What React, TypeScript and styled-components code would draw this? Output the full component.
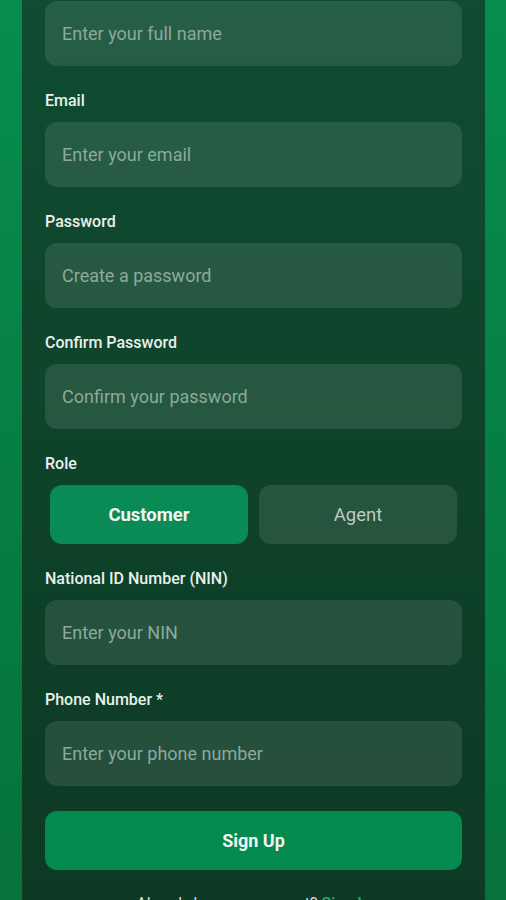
import React, { useState } from 'react'
import styled, { createGlobalStyle } from 'styled-components'

const GlobalStyle = createGlobalStyle`
  html, body {
    margin: 0;
    padding: 0;
    height: 100%;
    overflow: hidden;
  }
  body {
    font-family: Roboto, 'Noto Sans', 'Liberation Sans', sans-serif;
    background: linear-gradient(180deg, #078d4d 0%, #067f43 50%, #06733a 100%);
  }
  * {
    box-sizing: border-box;
  }
`

const Page = styled.div`
  display: flex;
  justify-content: center;
  padding: 0 21px 0 22px;
`

const Card = styled.form`
  width: 100%;
  margin-top: -55px;
  padding: 25px 23px 60px;
  background: linear-gradient(180deg, #0f4d33 0%, #0e4229 55%, #0d3824 100%);
  display: flex;
  flex-direction: column;
  gap: 25px;
`

const Field = styled.div`
  display: flex;
  flex-direction: column;
  gap: 11px;
`

const Label = styled.label`
  font-size: 16px;
  line-height: 20px;
  font-weight: 500;
  color: #e9f1ed;
`

const Input = styled.input`
  height: 65px;
  width: 100%;
  border: none;
  outline: none;
  border-radius: 12px;
  padding: 0 17px;
  background: rgba(255, 255, 255, 0.1);
  font-family: inherit;
  font-size: 18px;
  color: #eef4f1;

  &::placeholder {
    color: #8caa9b;
  }
`

const RoleGroup = styled.div`
  display: grid;
  grid-template-columns: 1fr 1fr;
  gap: 11px;
  padding: 0 5px;
`

const RoleButton = styled.button<{ active?: boolean }>`
  height: 59px;
  border: none;
  border-radius: 12px;
  font-family: inherit;
  font-size: 18.5px;
  font-weight: ${({ active }) => (active ? 700 : 400)};
  color: ${({ active }) => (active ? '#f1f7f4' : '#bccbc4')};
  background: ${({ active }) => (active ? '#0a8a55' : 'rgba(255, 255, 255, 0.1)')};
  cursor: pointer;
`

const SubmitButton = styled.button`
  height: 59px;
  border: none;
  border-radius: 12px;
  background: #04894f;
  font-family: inherit;
  font-size: 18px;
  font-weight: 700;
  color: #eef6f2;
  cursor: pointer;
`

const Footer = styled.p`
  margin: -1px 0 0;
  text-align: center;
  font-size: 16px;
  line-height: 20px;
  color: #d3ded8;
`

const FooterLink = styled.a`
  color: #22b070;
  font-weight: 500;
  text-decoration: none;
`

const fields = [
  { label: 'Full Name', placeholder: 'Enter your full name', type: 'text' },
  { label: 'Email', placeholder: 'Enter your email', type: 'email' },
  { label: 'Password', placeholder: 'Create a password', type: 'password' },
  { label: 'Confirm Password', placeholder: 'Confirm your password', type: 'password' },
]

const App: React.FC = () => {
  const [role, setRole] = useState<'customer' | 'agent'>('customer')

  return (
    <>
      <GlobalStyle />
      <Page>
        <Card onSubmit={(e) => e.preventDefault()}>
          {fields.map((f) => (
            <Field key={f.label}>
              <Label>{f.label}</Label>
              <Input type={f.type} placeholder={f.placeholder} />
            </Field>
          ))}

          <Field>
            <Label>Role</Label>
            <RoleGroup>
              <RoleButton type="button" active={role === 'customer'} onClick={() => setRole('customer')}>
                Customer
              </RoleButton>
              <RoleButton type="button" active={role === 'agent'} onClick={() => setRole('agent')}>
                Agent
              </RoleButton>
            </RoleGroup>
          </Field>

          <Field>
            <Label>National ID Number (NIN)</Label>
            <Input type="text" placeholder="Enter your NIN" />
          </Field>

          <Field>
            <Label>Phone Number *</Label>
            <Input type="tel" placeholder="Enter your phone number" />
          </Field>

          <SubmitButton type="submit">Sign Up</SubmitButton>

          <Footer>
            Already have an account? <FooterLink href="#">Sign In</FooterLink>
          </Footer>
        </Card>
      </Page>
    </>
  )
}

export default App
